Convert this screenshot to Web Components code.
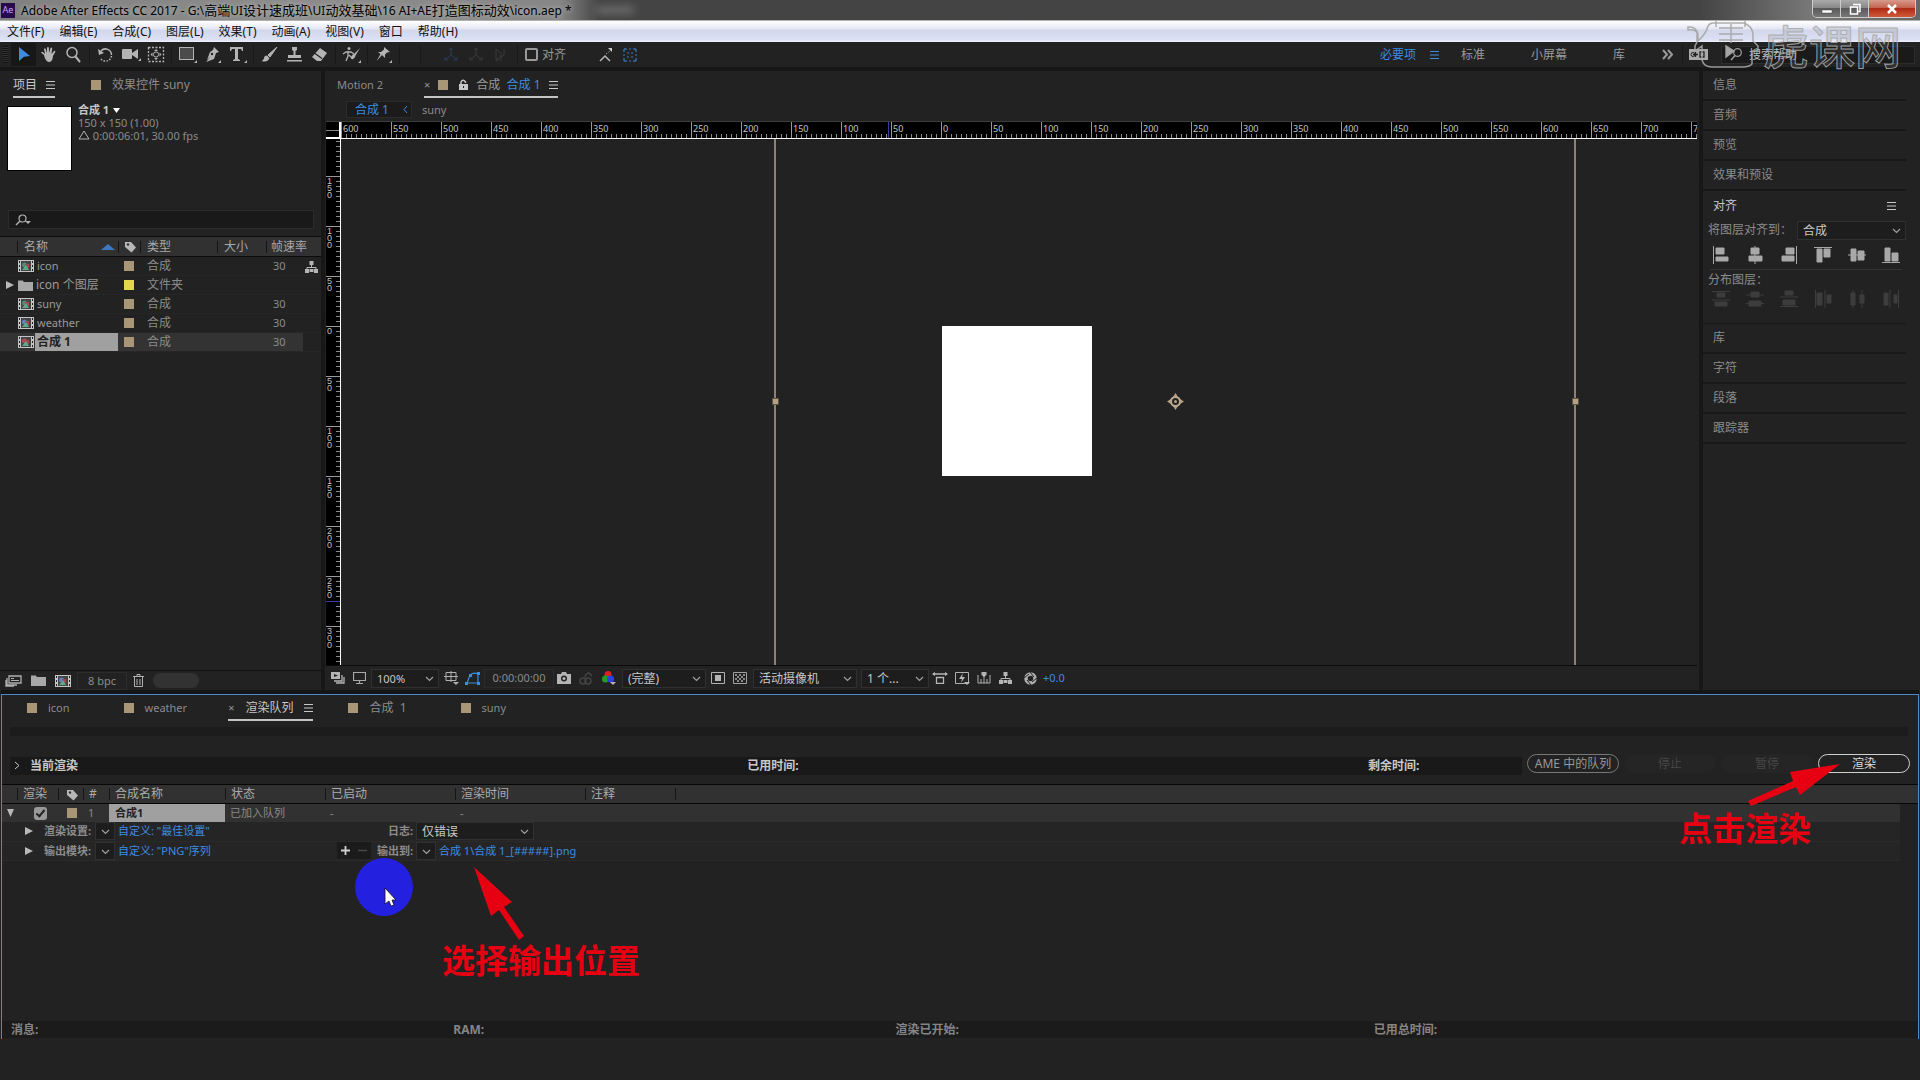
<!DOCTYPE html>
<html lang="zh-CN">
<head>
<meta charset="utf-8">
<title>Adobe After Effects CC 2017</title>
<style>
  :root {
    --bg: #222222; --gap: #171717; --well: #191919; --line: #353535; --head: #313131;
    --text: #8b8b8b; --bright: #c8c8c8; --blue: #3d8ce0; --tan: #a89677; --red: #e60012;
    --latin: "Noto Sans", "Noto Sans CJK SC", sans-serif;
  }
  body { margin: 0; min-height: 100vh; background: var(--bg); color: var(--text); font: 12px/18px var(--latin); display: flex; flex-direction: column; overflow: hidden; }
</style>
</head>
<body>
<ae-app></ae-app>
<script>
const BASE = `<style>
  * { box-sizing: border-box; }
  button { font: inherit; color: inherit; background: none; border: 0; padding: 0; margin: 0; display: flex; align-items: center; justify-content: center; }
  a { color: var(--blue); text-decoration: none; }
  table { border-collapse: collapse; border-spacing: 0; table-layout: fixed; width: 100%; }
  th, td { padding: 0; font-weight: normal; text-align: left; white-space: nowrap; }
  .small { font-size: 11px; }
  .sw { display: block; width: 10px; height: 10px; background: var(--tan); flex: none; }
</style>`;

function define(name, html, init) {
  const t = document.createElement('template');
  t.innerHTML = BASE + html;
  customElements.define(name, class extends HTMLElement {
    constructor() {
      super();
      this.attachShadow({ mode: 'open' }).append(t.content.cloneNode(true));
    }
    connectedCallback() { if (init && !this.ready) { this.ready = true; init(this, this.shadowRoot); } }
  });
}

/* Icon set: [width, height, markup]; shapes use currentColor */
const film = c => `<rect width="16" height="12" fill="#c4c4c4"/><path d="M1 1h1v2h-1zM1 5h1v2h-1zM1 9h1v2h-1zM14 1h1v2h-1zM14 5h1v2h-1zM14 9h1v2h-1z" fill="#222"/><rect x="3" y="1" width="10" height="10" fill="#444"/><circle cx="6.500" cy="5" r="2.500" fill="${c}"/><rect x="7" y="4" width="4" height="4" fill="#a8464c"/><path d="M4 10l4-5 3 5z" fill="#5fa98b"/>`;
const ICONS = {
  arrow: [14, 18, '<path d="M2 1l11 9-6 .7L2 15z" fill="#3d8ce0"/>'],
  hand: [17, 17, '<path d="M4 9L1 6.500q1-1.300 2.200-.3L5 8 4 3q.8-1.300 1.700 0L7 7V1.500q1-1.200 1.900 0L9 7l1.500-5q1.200-1 1.700.3L11.500 8 14 5q1.300-.6 1.400.7L13 10q-.5 6-4 6T4 9z" fill="currentColor"/>'],
  zoom: [17, 17, '<circle cx="7" cy="6.500" r="5" fill="none" stroke="currentColor" stroke-width="1.500"/><path d="M10.500 10.500L15 16" stroke="currentColor" stroke-width="2"/>'],
  rotate: [17, 16, '<path d="M4 4a6 6 0 0 1 10.500 4" fill="none" stroke="currentColor" stroke-width="1.500"/><path d="M14.500 9A6 6 0 0 1 4 12" fill="none" stroke="currentColor" stroke-width="1.500" stroke-dasharray="1.500 1.500"/><path d="M1 2l1 6 5-2z" fill="currentColor"/>'],
  cam: [20, 15, '<rect x="1" y="2" width="10" height="10" rx="1" fill="currentColor"/><path d="M11 6l6-4v10l-6-4zM17 14h3v-3z" fill="currentColor"/>'],
  pan: [18, 17, '<rect x="1.500" y="1.500" width="15" height="14" fill="none" stroke="currentColor" stroke-width="1.300" stroke-dasharray="2 1.500"/><circle cx="9" cy="8.500" r="2.600" fill="none" stroke="currentColor"/><path d="M9 3l2 2H7zM9 14l2-2H7zM3.500 8.500l2-2v4zM14.500 8.500l-2-2v4z" fill="currentColor"/>'],
  rect: [19, 17, '<rect x="1.500" y="1.500" width="14" height="12" fill="#4b4b4b" stroke="currentColor"/><path d="M16 17h3v-3z" fill="currentColor"/>'],
  pen: [18, 17, '<path d="M10 1l5 5-3 1-2 6-8 3 5-6-4 4 3-8 3-2z" fill="currentColor"/><circle cx="8" cy="8" r="1.200" fill="#222"/><path d="M14 17h3v-3z" fill="currentColor"/>'],
  type: [18, 17, '<path d="M1 1h13v4h-1l-1-2H9v10l2 1v1H4v-1l2-1V3H3L2 5H1zM15 17h3v-3z" fill="currentColor"/>'],
  brush: [17, 17, '<path d="M16 1L7 9l2 2z" fill="currentColor" stroke="currentColor"/><path d="M6 9.500q-3 0-3 3-1 2-2.500 2.500 6 2 8-3z" fill="currentColor"/>'],
  stamp: [17, 17, '<path d="M6 1h5v3L9.500 5v4H15v3H2V9h5.500V5L6 4zM1 14h15v1.500H1z" fill="currentColor"/>'],
  eraser: [18, 16, '<path d="M9 1l7 5-6 8H6L1 10z" fill="currentColor"/><path d="M4 6.500l7 5" stroke="#222" stroke-width="1.200"/>'],
  roto: [20, 17, '<circle cx="7" cy="2.500" r="1.500" fill="currentColor"/><path d="M1 8l3-2h5l3 2M6 5v5l-2 5M7 9l4 4" fill="none" stroke="currentColor" stroke-width="1.300"/><path d="M18 2l-6 6 1.500 1.500zM12 8q-3 1-3 5 4 0 4.500-3.500zM16 17h3v-3z" fill="currentColor"/>'],
  pin: [18, 17, '<path d="M9 1l6 5-3 .5-2 2v3.500L7 9l-5.500 6L5.500 8 3 6h3l3-2.500zM14 17h3v-3z" fill="currentColor"/>'],
  axis: [17, 15, '<path d="M8 1v7l-6 5M8 8l6 5M6 3l2-2 2 2M2 10v3h3M14 10v3h-3" fill="none" stroke="currentColor"/>'],
  axis2: [17, 15, '<path d="M3 2l5 4v8M3 13l8-5V2M3 2v11M3 13h3" fill="none" stroke="currentColor"/>'],
  snap: [16, 15, '<path d="M1 14l5-5 5 5" fill="none" stroke="#b5b5b5" stroke-width="1.500"/><path d="M7 7l4-3" stroke="#aaa" stroke-dasharray="1.500 1.500"/><path d="M9 1h4v4z" fill="#ccc"/>'],
  target: [14, 14, '<path d="M1 4V1h3M10 1h3v3M13 10v3h-3M4 13H1v-3" fill="none" stroke="#3d8ce0"/><path d="M5 6V4M9 4v2M5 8v2M9 8v2M6 1h2M6 13h2M1 6v2M13 6v2" stroke="#3d78b8"/>'],
  more: [12, 11, '<path d="M1 1l4 4.500L1 10M6 1l4 4.500L6 10" fill="none" stroke="currentColor" stroke-width="2"/>'],
  sync: [21, 13, '<path d="M1 1h19v11H1z" fill="#aaa"/><path d="M5 6.500h5M7.500 4v5M12 4h4v5h-4z" fill="none" stroke="#222" stroke-width="1.300"/><circle cx="5" cy="6.500" r="2" fill="none" stroke="#222"/>'],
  search: [17, 13, '<circle cx="7.500" cy="4.500" r="3.800" fill="none" stroke="currentColor" stroke-width="1.300"/><path d="M5 7.500L1 12" stroke="currentColor" stroke-width="1.600"/>'],
  searchv: [18, 12, '<circle cx="7.500" cy="4.500" r="3.500" fill="none" stroke="currentColor" stroke-width="1.200"/><path d="M5 7l-4 4" stroke="currentColor" stroke-width="1.500"/><path d="M10 7h6l-3 3z" fill="currentColor"/>'],
  menu: [9, 8, '<path d="M0 .5h9M0 4h9M0 7.500h9" stroke="currentColor"/>'],
  lock: [9, 12, '<path d="M2 6V3q2-3.500 4.500 0v1" fill="none" stroke="currentColor" stroke-width="1.500"/><path d="M0 5h9v6H0z" fill="currentColor"/><path d="M4 7h1v2H4z" fill="#222"/>'],
  chev: [9, 6, '<path d="M1 1l3.500 3.500L8 1" fill="none" stroke="#a0a0a0" stroke-width="1.200"/>'],
  left: [5, 9, '<path d="M4 1L1 4.500 4 8" fill="none" stroke="currentColor"/>'],
  right: [6, 9, '<path d="M1 1l4 3.500L1 8" fill="none" stroke="currentColor"/>'],
  tri: [8, 8, '<path d="M0 0l8 4-8 4z" fill="#b8b8b8"/>'],
  trid: [7, 8, '<path d="M0 0h7L3.500 8z" fill="#b8b8b8"/>'],
  drop: [7, 6, '<path d="M0 0h7L3.500 5z" fill="#fff"/>'],
  sort: [14, 6, '<path d="M0 6h14L7 0z" fill="#3d78c0"/>'],
  tag: [13, 12, '<path d="M1 1h6l5 5.500L7.500 11.500 1 6z" fill="#b8b8b8"/><circle cx="4" cy="3.500" r="1.200" fill="#333"/>'],
  delta: [12, 10, '<path d="M6 1l5 8H1z" fill="none" stroke="#b0b0b0"/>'],
  film: [16, 12, film('#4e8d77')], film2: [16, 12, film('#5a82c8')], film3: [16, 12, film('#b04a5a')],
  folder: [15, 11, '<path d="M0 2V1h5l1 1h9v9H0z" fill="#a8a8a8"/><path d="M0 0h5" stroke="#a8a8a8"/>'],
  tree: [13, 12, '<path d="M4.500 0h4v4h-4zM0 8h4v4H0zM9 8h4v4H9zM4.500 8h4v3h-4z" fill="currentColor"/><path d="M6.500 3v4M2 9V6.500h9V9" fill="none" stroke="currentColor"/>'],
  interp: [17, 12, '<path d="M4 1h12v7H4zM2 3v7h10M1 5v6h8" fill="none" stroke="#b0b0b0" stroke-width="1.300"/><path d="M6 3h3v1H6zM6 5h8v1H6z" fill="#b0b0b0"/>'],
  trash: [11, 13, '<path d="M0 2.500h11M4 2V.5h3V2M1.500 3v9.500h8V3M4 5v6M7 5v6" fill="none" stroke="currentColor"/>'],
  stack: [14, 12, '<path d="M0 0h9v7H0z" fill="#b5b5b5"/><path d="M3 2l4 1.500L3 5z" fill="#222"/><path d="M3 9h8V3M5 11h8V5" fill="none" stroke="#b5b5b5" stroke-width="1.300"/>'],
  monitor: [13, 12, '<path d="M.5.500h12v8H.5zM3 11.500h7M6.500 9v2" fill="none" stroke="#a8a8a8" stroke-width="1.200"/>'],
  guides: [16, 14, '<path d="M2 1.500h10v8H2zM7 0v11M0 5.500h14" fill="none" stroke="#b0b0b0"/><path d="M9 11h6l-3 3z" fill="#b0b0b0"/>'],
  mask: [15, 13, '<path d="M2 11L5 3q4-3 8-1v9z" fill="none" stroke="#3d8ce0" stroke-width="1.200"/><path d="M0 10h3v3H0zM4 2h3v3H4zM12 0h3v3h-3zM12 10h3v3h-3z" fill="#3d8ce0"/>'],
  photo: [14, 12, '<path d="M0 2h4l1-2h4l1 2h4v10H0z" fill="#b5b5b5"/><circle cx="7" cy="6.500" r="3" fill="#222"/><circle cx="7" cy="6.500" r="1.500" fill="#b5b5b5"/>'],
  people: [14, 13, '<g fill="none" stroke="#444" stroke-width="1.500"><circle cx="4" cy="9" r="3"/><circle cx="9" cy="9" r="3"/><path d="M6 5q1-4 4-4l3 3"/></g>'],
  rgb: [14, 14, '<circle cx="6" cy="3.500" r="3.500" fill="#e02020"/><circle cx="3.500" cy="8" r="3.500" fill="#20a020"/><circle cx="8.500" cy="8" r="3.500" fill="#3040e0"/><path d="M8 11h6l-3 3z" fill="#b5b5b5"/>'],
  roi: [14, 12, '<path d="M.5.500h13v11H.5z" fill="none" stroke="#b0b0b0"/><path d="M4 3h6v6H4z" fill="#b5b5b5"/>'],
  grid: [14, 12, '<path d="M.5.500h13v11H.5z" fill="none" stroke="#a0a0a0"/><path d="M2 2h2v2H2zM6 2h2v2H6zM10 2h2v2h-2zM4 4h2v2H4zM8 4h2v2H8zM2 6h2v2H2zM6 6h2v2H6zM10 6h2v2h-2zM4 8h2v2H4zM8 8h2v2H8z" fill="#888"/>'],
  aspect: [16, 12, '<path d="M1 2h14M4.500 5.500h7v6h-7z" fill="none" stroke="#b5b5b5" stroke-width="1.300"/><path d="M0 2l3-2v4zM16 2l-3-2v4z" fill="#b5b5b5"/>'],
  fast: [15, 13, '<path d="M.5.500h13v11H.5z" fill="none" stroke="#b0b0b0"/><path d="M8 1L4 7h3l-1 4 4-6H7z" fill="#b5b5b5"/><path d="M9 10h6l-3 3z" fill="#b5b5b5"/>'],
  timeline: [14, 12, '<path d="M1 3v8h12V3M4 7v4M7 3v8M10 7v4" fill="none" stroke="#b0b0b0"/><path d="M4.500 0h5v3L7 5 4.500 3z" fill="#b5b5b5"/>'],
  shutter: [13, 13, '<circle cx="6.500" cy="6.500" r="4.500" fill="none" stroke="#b0b0b0" stroke-width="3.500"/><path d="M6 0l4 5M13 6l-5 4M7 13L3 8M0 6l5-4" stroke="#222" stroke-width="1"/>'],
  plus: [9, 9, '<path d="M4.500 0v9M0 4.500h9" stroke="#d0d0d0" stroke-width="1.800"/>'],
  minus: [9, 9, '<path d="M0 4.500h9" stroke="#484848" stroke-width="1.500"/>'],
  al1: [16, 18, '<path d="M.5 0v18M3 2h8v6H3zM3 11h12v4H3z"/>'], al2: [16, 18, '<path d="M8 0v18M4 2h8v6H4zM2 10h13v5H2z"/>'],
  al3: [16, 18, '<path d="M15.500 0v18M5 2h8v6H5zM1 10h12v5H1z"/>'], al4: [18, 18, '<path d="M0 1.500h18M3 3h5v13H3zM10 3h6v8h-6z"/>'],
  al5: [18, 18, '<path d="M0 9h18M3 3h5v12H3zM10 5h6v9h-6z"/>'], al6: [18, 18, '<path d="M0 16.500h18M3 2h5v13H3zM10 7h6v8h-6z"/>'],
  ds1: [18, 18, '<path d="M0 1.500h18M0 10h18M5 3h8v4H5zM3 12h12v4H3z"/>'], ds2: [18, 18, '<path d="M0 5h18M0 13.500h18M5 2h8v5H5zM3 11h12v5H3z"/>'],
  ds3: [18, 18, '<path d="M0 7h18M0 16.500h18M5 1h8v4H5zM3 10h12v5H3z"/>'], ds4: [18, 18, '<path d="M1.500 0v18M11 0v18M3 3h5v12H3zM13 5h4v8h-4z"/>'],
  ds5: [18, 18, '<path d="M5 0v18M14 0v18M3 3h4v12H3zM12 5h4v8h-4z"/>'], ds6: [18, 18, '<path d="M8 0v18M16.500 0v18M2 3h4v12H2zM12 5h3v8h-3z"/>'],
};
define('ae-icon', `<style>:host{display:inline-flex;flex:none}svg{display:block}</style>`, (el, root) => {
  const n = el.getAttribute('name'), [w, h, m] = ICONS[n];
  const body = /^(al|ds)\d/.test(n) ? `<g fill="currentColor" stroke="currentColor" stroke-width="1">${m}</g>` : m;
  root.innerHTML += `<svg width="${w}" height="${h}" viewBox="0 0 ${w} ${h}" aria-hidden="true">${body}</svg>`;
});

define('ae-select', `<style>
  :host { display: inline-grid; height: 19px; border: 1px solid #303030; background: #1d1d1d; color: var(--bright); }
  select, ae-icon { grid-area: 1 / 1; }
  select { appearance: none; background: none; border: 0; margin: 0; padding: 0 0 0 5px; font: inherit; color: inherit; min-width: 0; width: 100%; height: 100%; outline: 0; }
  ae-icon { justify-self: end; align-self: center; margin-right: 4px; pointer-events: none; }
</style><select></select><ae-icon name="chev"></ae-icon>`, (el, root) => {
  const s = root.querySelector('select');
  s.setAttribute('aria-label', el.getAttribute('label'));
  if (el.hasAttribute('value')) s.append(new Option(el.getAttribute('value')));
});

/* A panel tab with optional close mark, colour label and panel menu */
define('ae-tab', `<style>
  :host { display: flex; align-items: center; height: 24px; gap: 11px; white-space: nowrap; border-bottom: 2px solid transparent; }
  :host([active]) { gap: 9px; border-color: #c4c4c4; color: var(--bright); }
  .x { font-size: 11px; color: #999; }
  :host(:not([closable])) .x, :host(:not([swatch])) .sw, :host(:not([active])) ae-icon { display: none; }
</style><span class="x">×</span><span class="sw"></span><slot></slot><ae-icon name="menu"></ae-icon>`);

define('title-bar', `<style>
  :host { display: flex; height: 21px; align-items: center; background: linear-gradient(90deg, #808080 0, #8c8c8c 300px, #868686 560px, #444 600px, #444 1700px, #777 1810px, #666); border-bottom: 1px solid #b0b0b0; color: #000; font-size: 12px; padding-left: 1px; }
  .ae { width: 14px; height: 15px; background: #2a0a4e; color: #c9a2f0; font-size: 9px; line-height: 14px; text-align: center; margin-right: 6px; }
  .t { white-space: nowrap; text-shadow: 0 0 5px #ccc; }
  .t span { font-size: 13px; }
  .blob { width: 38px; height: 6px; background: #777; filter: blur(4px); margin-left: 24px; }
  .w { display: flex; margin-left: auto; margin-right: 4px; height: 18px; align-self: flex-start; border: 1px solid #ccc; border-top: 0; border-radius: 0 0 5px 5px; overflow: hidden; }
  .w button { width: 28px; background: linear-gradient(#aaa, #888 45%, #5a5a5a 50%, #777); border-right: 1px solid #ccc; }
  .w .c { width: 46px; border: 0; background: linear-gradient(#d89a8c, #c46450 45%, #b02a14 50%, #cf5a3a); }
</style>
<span class="ae">Ae</span><span class="t">Adobe After Effects CC 2017 - G:\\<span>高端</span>UI<span>设计速成班</span>\\UI<span>动效基础</span>\\16 AI+AE<span>打造图标动效</span>\\icon.aep *</span><span class="blob"></span>
<div class="w"><button aria-label="最小化"><svg width="12" height="12"><path d="M1 7h10v3H1z" fill="#fff" stroke="#444" stroke-width=".5"/></svg></button>
<button aria-label="还原"><svg width="12" height="12"><path d="M4 1.500h7v7h-2M1.500 4h7v7h-7z" fill="none" stroke="#fff" stroke-width="1.500"/></svg></button>
<button class="c" aria-label="关闭"><svg width="12" height="12"><path d="M2 2l8 8M10 2l-8 8" stroke="#fff" stroke-width="2.500"/></svg></button></div>`);

define('menu-bar', `<style>
  :host { display: flex; height: 21px; align-items: center; gap: 15px; padding-left: 7px; color: #111; background: linear-gradient(#fff, #e6e8f5 35%, #d3d7ec 45%, #dde1f4 90%, #f4f4ff); }
  button { white-space: nowrap; }
</style>` + ['文件(F)','编辑(E)','合成(C)','图层(L)','效果(T)','动画(A)','视图(V)','窗口','帮助(H)'].map(t => `<button>${t}</button>`).join(''));

const tools = list => '<div class="g">' + list.map(n => `<button class="${n}" aria-label="${n}"><ae-icon name="${n}"></ae-icon></button>`).join('') + '</div>';
define('tool-bar', `<style>
  :host { display: flex; height: 25px; align-items: center; padding-left: 3px; color: #b4b4b4; }
  .grip { width: 5px; height: 17px; margin-right: 3px; background: repeating-linear-gradient(#111 0 1px, #333 1px 2px); }
  .g { display: flex; margin-right: 7px; height: 23px; position: relative; }
  .g::after, i { content: ""; width: 1px; height: 20px; margin: 1px -4px 0 3px; background: #191919; }
  .g button { width: 25px; height: 23px; }
  .g .arrow { background: #171717; }
  .dim { display: flex; gap: 8px; margin-left: 22px; color: #3a3a3a; }
  .dim ae-icon:first-child { color: #2a3d5c; }
  label { display: flex; align-items: center; gap: 4px; color: #999; }
  input[type=checkbox] { appearance: none; width: 13px; height: 13px; margin: 0; border: 2px solid #999; border-radius: 2px; }
  i { flex: none; margin: 0; }
  .ws { display: flex; align-items: center; color: #9a9a9a; margin-left: auto; }
  .q { display: flex; align-items: center; gap: 2px; width: 194px; height: 18px; border: 1px solid #2c2c2c; background: #1a1a1a; margin: 0 5px 0 12px; padding-left: 8px; }
  .q input { min-width: 0; flex: 1; background: none; border: 0; font: inherit; padding: 0; height: 16px; }
  .q input::placeholder { color: #bcbcbc; }
</style>
<span class="grip"></span>
${tools(['arrow','hand','zoom'])}${tools(['rotate','cam','pan'])}${tools(['rect','pen','type'])}${tools(['brush','stamp','eraser'])}${tools(['roto'])}${tools(['pin'])}
<i style="margin-left:17px"></i>
<div class="dim"><ae-icon name="axis"></ae-icon><ae-icon name="axis"></ae-icon><ae-icon name="axis2"></ae-icon></div>
<i style="margin:0 7px 0 7px"></i>
<label><input type="checkbox">对齐</label>
<ae-icon name="snap" style="margin-left:33px"></ae-icon><ae-icon name="target" style="margin-left:8px"></ae-icon>
<div class="ws"><a href="#" style="margin-right:14px">必要项</a><ae-icon name="menu" style="color:#3d8ce0;margin-right:22px"></ae-icon><span style="margin-right:46px">标准</span><span style="margin-right:46px">小屏幕</span><span style="margin-right:37px">库</span><ae-icon name="more" style="margin-right:8px"></ae-icon><i></i><ae-icon name="sync" style="margin-left:5px"></ae-icon>
<div class="q"><ae-icon name="search"></ae-icon><input type="text" placeholder="搜索帮助" aria-label="搜索帮助"></div></div>`);

const rows = [['icon','film','30'],['icon 个图层','folder',''],['suny','film','30'],['weather','film2','30'],['合成 1','film3','30']];
define('project-panel', `<style>
  :host { display: flex; flex-direction: column; width: 325px; flex: none; background: var(--bg); border-right: 4px solid var(--gap); }
  .tabs { display: flex; gap: 36px; padding: 3px 0 0 13px; }
  .info { display: flex; gap: 6px; padding: 8px 0 0 7px; height: 112px; line-height: 13px; }
  .thumb { width: 65px; height: 65px; background: #fff; border: 1px solid #000; }
  .info .small { margin-top: -3px; }
  .info b { color: var(--bright); margin-right: 4px; }
  .info span { display: block; }
  .s { display: flex; align-items: center; margin: 0 7px 7px 8px; height: 19px; background: var(--well); border: 1px solid #2b2b2b; padding-left: 6px; color: #b0b0b0; }
  .s input { flex: 1; min-width: 0; background: none; border: 0; }
  thead { background: var(--head); border: solid #0c0c0c; border-width: 1px 0; color: #a8a8a8; }
  th { height: 19px; padding-left: 7px; background: linear-gradient(#151515, #151515) left center / 1px 12px no-repeat; }
  th:first-child { background: none; }
  th ae-icon { vertical-align: middle; }
  th.n { display: flex; align-items: center; justify-content: space-between; padding-right: 3px; height: 19px; }
  td { height: 19px; padding-left: 7px; border-bottom: 1px solid #262626; }
  td .sw { margin-left: -1px; }
  td:first-child { padding-left: 6px; }
  td.nm { padding: 0; }
  td.nm div { display: flex; align-items: center; gap: 1px; height: 18px; padding-left: 1px; }
  td.nm span { flex: 1; padding-left: 2px; color: #9a9a9a; }
  tr.sel { background: #333; } tr.sel td:last-child { background: var(--bg); }
  tr.sel .nm span { background: #a0a0a0; color: #222; font-weight: bold; line-height: 18px; }
  td:last-child { padding-left: 2px; }
  .foot { display: flex; align-items: center; height: 20px; margin-top: auto; padding-left: 5px; gap: 9px; border-top: 1px solid #111; }
  .bpc { border: 1px solid #2c2c2c; width: 50px; height: 18px; margin: 0 -3px 0 -3px; }
  .pill { width: 46px; height: 15px; border-radius: 8px; background: #323232; }
</style>
<div class="tabs"><ae-tab active>项目</ae-tab><ae-tab swatch>效果控件 suny</ae-tab></div>
<div class="info"><div class="thumb"></div><div class="small"><b>合成 1</b><ae-icon name="drop"></ae-icon><span>150 x 150 (1.00)</span><span><ae-icon name="delta"></ae-icon> 0:00:06:01, 30.00 fps</span></div></div>
<div class="s"><ae-icon name="searchv"></ae-icon><input type="text" aria-label="搜索项目"></div>
<table><colgroup><col style="width:17px"><col style="width:101px"><col style="width:22px"><col style="width:77px"><col style="width:49px"><col style="width:37px"><col></colgroup>
<thead><tr><th></th><th class="n">名称<ae-icon name="sort"></ae-icon></th><th style="padding-left:6px"><ae-icon name="tag"></ae-icon></th><th>类型</th><th>大小</th><th colspan="2" style="padding-left:5px">帧速率</th></tr></thead>
<tbody>${rows.map((r, i) => `<tr class="${i === 4 ? 'sel' : ''}"><td>${i === 1 ? '<ae-icon name="tri"></ae-icon>' : ''}</td><td class="nm"><div><ae-icon name="${r[1]}"></ae-icon><span class="${/^[a-z]+$/.test(r[0]) ? 'small' : ''}">${r[0]}</span></div></td><td><span class="sw" style="${i === 1 ? 'background:#e2d64a' : ''}"></span></td><td>${i === 1 ? '文件夹' : '合成'}</td><td></td><td class="small">${r[2]}</td><td>${i === 0 ? '<ae-icon name="tree" style="color:#b5b5b5;vertical-align:middle"></ae-icon>' : ''}</td></tr>`).join('')}</tbody></table>
<div class="foot"><ae-icon name="interp"></ae-icon><ae-icon name="folder"></ae-icon><ae-icon name="film2"></ae-icon><button class="bpc small">8 bpc</button><button aria-label="删除"><ae-icon name="trash" style="color:#b0b0b0"></ae-icon></button><span class="pill"></span></div>`);

/* Rulers are strips of 50-unit segments; each carries its label and minor ticks */
define('ae-ruler', `<style>
  :host { display: flex; background: #000; overflow: hidden; color: #c4c4c4; position: relative; }
  div { flex: none; }
  :host([axis=x]) { font: 9px/9px "Noto Sans", sans-serif; }
  :host([axis=x]) div { width: 50px; height: 100%; padding: 2px 0 0 2px; background: linear-gradient(#999,#999) 0 0 / 1px 100% no-repeat, repeating-linear-gradient(90deg, #8a8a8a 0 1px, transparent 1px 5px) 0 100% / 100% 4px no-repeat; }
  :host([axis=y]) { flex-direction: column; font: 9px/7px "Liberation Sans", sans-serif; }
  :host([axis=y]) div { height: 50px; padding: 2px 0 0 1px; background: linear-gradient(#999,#999) 0 0 / 100% 1px no-repeat, repeating-linear-gradient(#8a8a8a 0 1px, transparent 1px 5px) 100% 0 / 4px 100% no-repeat; }
  span { display: block; }
  i { position: absolute; background: #3b3f9c; }
  :host([axis=x]) i { width: 1px; top: 0; bottom: 0; } :host([axis=y]) i { height: 1px; left: 0; right: 0; }
</style>`, (el, root) => {
  const x = el.getAttribute('axis') === 'x', from = +el.getAttribute('from'), to = +el.getAttribute('to');
  for (let v = from; v <= to; v += 50) {
    const d = document.createElement('div'), s = !x && v === from ? '' : String(Math.abs(v));
    if (x) d.textContent = s; else for (const c of s) { const e = document.createElement('span'); e.textContent = c; d.append(e); }
    root.append(d);
  }
  const m = document.createElement('i');
  m.style[x ? 'left' : 'top'] = (+el.getAttribute('mark') - from) + 'px';
  root.append(m);
});

define('comp-panel', `<style>
  :host { display: flex; flex-direction: column; flex: 1; min-width: 0; background: var(--bg); }
  .tabs { display: flex; gap: 39px; padding: 3px 0 0 12px; }
  .crumb { display: flex; align-items: center; gap: 10px; padding: 3px 0 3px 21px; height: 23px; }
  .crumb button { border: 1px solid #2b2b2b; background: #1b1b1b; height: 17px; width: 66px; gap: 14px; padding-left: 5px; color: var(--blue); }
  .view { display: grid; grid-template: 17px 1fr / 15px 1fr; flex: 1; border-top: 1px solid #3c3c3c; border-bottom: 1px solid #0a0a0a; margin: 0 2px 0 1px; }
  .corner { background: #000; border-right: 2px solid #fff; border-bottom: 2px solid #fff; padding: 8px 0 0 0; }
  .corner::before { content: ""; display: block; border-top: 1px solid #888; }
  ae-ruler[axis=x] { border-bottom: 1px solid #fff; }
  ae-ruler[axis=y] { border-right: 1px solid #fff; }
  .stage { position: relative; overflow: hidden; }
  .comp { position: absolute; left: 601px; top: 187px; width: 150px; height: 150px; background: #fff; }
  .layer { position: absolute; left: 433px; top: -120px; width: 802px; height: 764px; border: 2px solid #8e8270; }
  .h { position: absolute; width: 7px; height: 7px; background: #b5a284; border: 1px solid #5c5344; top: 259px; }
  .anchor { position: absolute; left: 826px; top: 254px; }
  .bar { display: flex; align-items: center; height: 24px; padding: 1px 0 1px 6px; }
  .bar ae-icon { margin-right: 8px; }
  .bar ae-select { margin-right: 8px; }
  .tc { border: 1px solid #2b2b2b; width: 70px; height: 19px; margin-right: 3px; }
</style>
<div class="tabs"><ae-tab class="small" style="padding-right:2px">Motion 2</ae-tab><ae-tab active closable swatch style="gap:8px"><ae-icon name="lock" style="margin-left:3px"></ae-icon><span style="color:#999">合成 <a href="#">&nbsp;合成 1</a></span></ae-tab></div>
<div class="crumb"><button>合成 1<ae-icon name="left"></ae-icon></button><span class="small">suny</span></div>
<div class="view"><div class="corner"></div><ae-ruler axis="x" from="-600" to="750" mark="-53"></ae-ruler>
<div style="position:relative;overflow:hidden;min-height:0"><ae-ruler axis="y" from="-200" to="300" mark="275" style="position:absolute;top:-13px;left:0;width:15px;bottom:0"></ae-ruler></div>
<div class="stage"><div class="comp"></div><div class="layer"></div><span class="h" style="left:431px"></span><span class="h" style="left:1231px"></span>
<svg class="anchor" width="17" height="17"><circle cx="8.500" cy="8.500" r="4.500" fill="#222" stroke="#c0ad90" stroke-width="2"/><path d="M8.500 0l2.500 4H6zM8.500 17l2.500-4H6zM0 8.500L4 6v5zM17 8.500L13 6v5z" fill="#b5a284"/><circle cx="8.500" cy="8.500" r="1.500" fill="#b5a284"/></svg></div></div>
<div class="bar"><ae-icon name="stack"></ae-icon><ae-icon name="monitor" style="margin-right:5px"></ae-icon><ae-select class="small" label="放大率" value="100%" style="width:68px"></ae-select><ae-icon name="guides" style="margin:0 5px 0 -3px"></ae-icon><ae-icon name="mask" style="margin-right:4px"></ae-icon><button class="tc small">0:00:00:00</button><ae-icon name="photo"></ae-icon><ae-icon name="people"></ae-icon><ae-icon name="rgb" style="margin:0 6px 0 1px"></ae-icon>
<ae-select label="分辨率" value="(完整)" style="width:84px;margin-right:5px"></ae-select><ae-icon name="roi"></ae-icon><ae-icon name="grid" style="margin-right:6px"></ae-icon><ae-select label="视图" value="活动摄像机" style="width:104px;margin-right:4px"></ae-select><ae-select label="视图布局" value="1 个..." style="width:68px;margin-right:3px"></ae-select><ae-icon name="aspect" style="margin-right:7px"></ae-icon><ae-icon name="fast" style="margin-right:7px"></ae-icon><ae-icon name="timeline"></ae-icon><ae-icon name="tree" style="color:#b5b5b5;margin-right:12px"></ae-icon><ae-icon name="shutter" style="margin-right:6px"></ae-icon><a class="small" href="#">+0.0</a></div>`);

define('side-panel', `<style>
  :host { display: block; width: 221px; flex: none; background: var(--bg); border-left: 4px solid var(--gap); padding: 0 14px 0 0; }
  section { height: 30px; line-height: 28px; padding-left: 10px; border-bottom: 2px solid #181818; }
  .al { height: 133px; color: var(--bright); position: relative; padding: 0; border-bottom-width: 1px; }
  header { display: flex; align-items: center; justify-content: space-between; height: 29px; padding: 0 10px 0 10px; }
  .row { display: flex; align-items: center; height: 20px; padding-left: 5px; color: var(--text); gap: 5px; line-height: 18px; }
  .row span { flex: 1; white-space: nowrap; }
  .row ae-select { width: 113px; }
  .ic { display: flex; gap: 9px; padding: 0 0 0 12px; height: 29px; align-items: center; color: #a8a8a8; }
  .ic button { width: 25px; height: 20px; flex: none; margin-left: -7px; margin-right: 7px; }
  .off { color: #3d3d3d; border: 0; }
  hr { border: 0; border-top: 1px solid #333; margin: 0 4px 0 7px; }
</style>
<section>信息</section><section>音频</section><section>预览</section><section>效果和预设</section>
<section class="al"><header>对齐<ae-icon name="menu"></ae-icon></header>
<div class="row"><span>将图层对齐到：</span><ae-select label="对齐目标" value="合成"></ae-select></div>
<div class="ic">${[1,2,3,4,5,6].map(i => `<button aria-label="对齐 ${i}"><ae-icon name="al${i}"></ae-icon></button>`).join('')}</div><hr>
<div class="row"><span>分布图层：</span></div>
<div class="ic off" style="height:18px">${[1,2,3,4,5,6].map(i => `<button disabled aria-label="分布 ${i}"><ae-icon name="ds${i}"></ae-icon></button>`).join('')}</div></section>
<section>库</section><section>字符</section><section>段落</section><section>跟踪器</section>`);

define('render-queue', `<style>
  :host { display: flex; flex-direction: column; position: relative; height: 345px; margin: 4px 1px 0; border: 1px solid #4f86cc; border-bottom: 0; background: var(--bg); }
  .tabs { display: flex; gap: 54px; padding: 2px 0 6px 25px; }
  .tabs ae-tab { flex: none; }
  .band { height: 9px; margin: 0 10px 18px 8px; background: #1c1c1c; }
  .cur { display: flex; align-items: center; gap: 5px; margin: 0 8px 6px 8px; height: 24px; font-weight: bold; color: var(--bright); }
  .cur .b { flex: 1; display: flex; align-items: center; background: var(--well); height: 18px; }
  .b > * { flex: 623 0 0; white-space: nowrap; } .b > :first-child { flex-grow: 736; padding-left: 4px; } .b > :last-child { flex: none; width: 154px; }
  .b ae-icon { margin-right: 10px; }
  .cur button { width: 92px; height: 19px; border-radius: 10px; border: 1px solid #777; color: #999; font-weight: normal; margin-bottom: 5px; }
  .cur button:disabled { border-color: #252525; background: #252525; color: #474747; }
  .cur .go { border-color: #d0d0d0; color: #ddd; }
  thead { background: var(--head); border: solid #060606; border-width: 1px 0; color: #ababab; }
  th { height: 18px; padding-left: 6px; background: linear-gradient(#151515, #151515) left center / 1px 12px no-repeat; }
  th:first-child, th:last-child { background: none; }
  th ae-icon { vertical-align: middle; }
  td { height: 18px; padding-left: 5px; font-size: 11px; }
  .main td:not(:last-child) { background: #313131; }
  .main td.nm { background: #a0a0a0; color: #222; font-weight: bold; padding-left: 6px; }
  .main input { appearance: none; width: 13px; height: 13px; margin: 0 0 0 12px; background: #999; border-radius: 3px; display: grid; place-items: center; }
  .main input::before { content: ""; width: 3px; height: 7px; border: solid #222; border-width: 0 2px 2px 0; rotate: 40deg; margin-top: -2px; }
  .sub td { height: 19px; padding: 0; }
  .sub td:not(:last-child) { background: #252525; border-bottom: 1px solid #2a2a2a; }
  .f { display: flex; align-items: center; height: 18px; }
  .f b { color: #8c8c8c; text-align: right; white-space: nowrap; }
  .f ae-icon { margin: 0 11px 0 23px; }
  .f .lab { width: 51px; text-align: left; }
  .f ae-select { height: 18px; margin-right: 3px; }
  .dd { width: 20px; }
  .set { width: 219px; }
  .pm { display: flex; width: 35px; } .pm button { width: 17px; height: 17px; background: #1b1b1b; } .pm ae-icon { margin: 0; }
  .status { display: grid; grid-template-columns: 443fr 443fr 479fr 545fr; margin: auto 0 1px 0; padding-left: 9px; height: 17px; line-height: 17px; background: #1b1b1b; font-size: 12px; font-weight: bold; color: #858585; }
  .cursor, .note { position: absolute; }
  .note { color: var(--red); font: bold 33px/36px "Noto Sans CJK SC", sans-serif; white-space: nowrap; }
  .note svg { display: block; }
</style>
<div class="tabs"><ae-tab class="small" swatch>icon</ae-tab><ae-tab class="small" swatch>weather</ae-tab><ae-tab closable active style="gap:11px;margin:0 -19px 0 -13px">渲染队列</ae-tab><ae-tab swatch>合成&nbsp; 1</ae-tab><ae-tab class="small" swatch>suny</ae-tab></div>
<div class="band"></div>
<div class="cur"><div class="b"><span><ae-icon name="right"></ae-icon>当前渲染</span><span>已用时间:</span><span>剩余时间:</span></div><button>AME 中的队列</button><button disabled>停止</button><button disabled>暂停</button><button class="go">渲染</button></div>
<table><colgroup><col style="width:15px"><col style="width:41px"><col style="width:25px"><col style="width:26px"><col style="width:116px"><col style="width:100px"><col style="width:130px"><col style="width:130px"><col style="width:90px"><col><col style="width:18px"></colgroup>
<thead><tr><th></th><th>渲染</th><th style="padding-left:8px"><ae-icon name="tag"></ae-icon></th><th>#</th><th>合成名称</th><th>状态</th><th>已启动</th><th>渲染时间</th><th>注释</th><th></th><th></th></tr></thead>
<tbody><tr class="main"><td><ae-icon name="trid"></ae-icon></td><td><input type="checkbox" checked aria-label="渲染"></td><td style="padding-left:9px"><span class="sw"></span></td><td>1</td><td class="nm">合成1</td><td>已加入队列</td><td>-</td><td>-</td><td></td><td></td><td></td></tr>
<tr class="sub"><td colspan="10"><div class="f"><ae-icon name="tri"></ae-icon><b class="lab">渲染设置:</b><ae-select class="dd" label="渲染设置"></ae-select><a class="set" href="#">自定义: "最佳设置"</a><b style="width:76px;margin-right:3px">日志:</b><ae-select label="日志" value="仅错误" style="width:118px;font-size:12px"></ae-select></div></td><td></td></tr>
<tr class="sub"><td colspan="10"><div class="f"><ae-icon name="tri"></ae-icon><b class="lab">输出模块:</b><ae-select class="dd" label="输出模块"></ae-select><a class="set" href="#">自定义: "PNG"序列</a><span class="pm"><button aria-label="添加"><ae-icon name="plus"></ae-icon></button><button aria-label="移除"><ae-icon name="minus"></ae-icon></button></span><b style="width:41px;margin-right:3px">输出到:</b><ae-select class="dd" label="输出到"></ae-select><a href="#">合成 1\\合成 1_[#####].png</a></div></td><td></td></tr></tbody></table>
<div class="status"><span>消息:</span><span>RAM:</span><span>渲染已开始:</span><span>已用总时间:</span></div>
<svg class="cursor" style="left:353px;top:163px" width="60" height="60"><circle cx="29" cy="29" r="29" fill="#2320e0"/><path d="M30 30v16l4-3 2 5 3-1-2-5h4z" fill="#fff" stroke="#111" stroke-width=".8"/></svg>
<div class="note" style="left:440px;top:172px"><svg width="90" height="74"><path d="M32 0L70 35L62 40L82 69L77 73L57 43L49 49z" fill="#e60012"/></svg>选择输出位置</div>
<div class="note" style="right:107px;top:69px"><svg width="169" height="45" style="margin-right:-39px"><path d="M161 0L121 31L117 23L72 42L69 37L114 17L111 8z" fill="#e60012"/></svg>点击渲染</div>`);

/* Site watermark laid over the window's top right corner */
define('brand-mark', `<style>
  :host { position: absolute; right: 19px; top: 20px; display: flex; align-items: center; gap: 2px; height: 48px; pointer-events: none; }
  span { font: 500 46px/48px "Noto Sans CJK SC", sans-serif; color: rgba(120,120,120,.2); -webkit-text-stroke: 1px rgba(170,170,170,.9); }
</style><svg width="74" height="48" fill="none" stroke="#a5a5a5" stroke-opacity=".9" stroke-width="1.500"><path d="M1 7q8-1 10 7v7q8-7 10-15 2-3 5-3h31q8 3 9 11v7l5 5v5h-6v13q-3 3-9 3H25q-8 0-10-7V26l-7 5v-5l2-4v-9Q8 9 1 10z"/><path d="M29 1v6M58 1v6M32 8h24M32 14h24M32 20h24M44 4v19" /><path d="M39 26l8 5-8 6z" fill="#a5a5a5"/></svg><span>虎课网</span>`);

define('ae-app', `<style>
  :host { display: flex; flex-direction: column; position: relative; flex: 1; }
  tool-bar { flex: none; border-bottom: 0; }
  .mid { display: flex; height: 623px; border-top: 4px solid var(--gap); }
  .mid > * { min-height: 0; }
  render-queue { box-shadow: 0 -4px 0 #151515; flex: none; }
</style><title-bar></title-bar><menu-bar></menu-bar><tool-bar></tool-bar><div class="mid"><project-panel></project-panel><comp-panel></comp-panel><side-panel></side-panel></div><render-queue></render-queue><brand-mark></brand-mark>`);
</script>
</body>
</html>
